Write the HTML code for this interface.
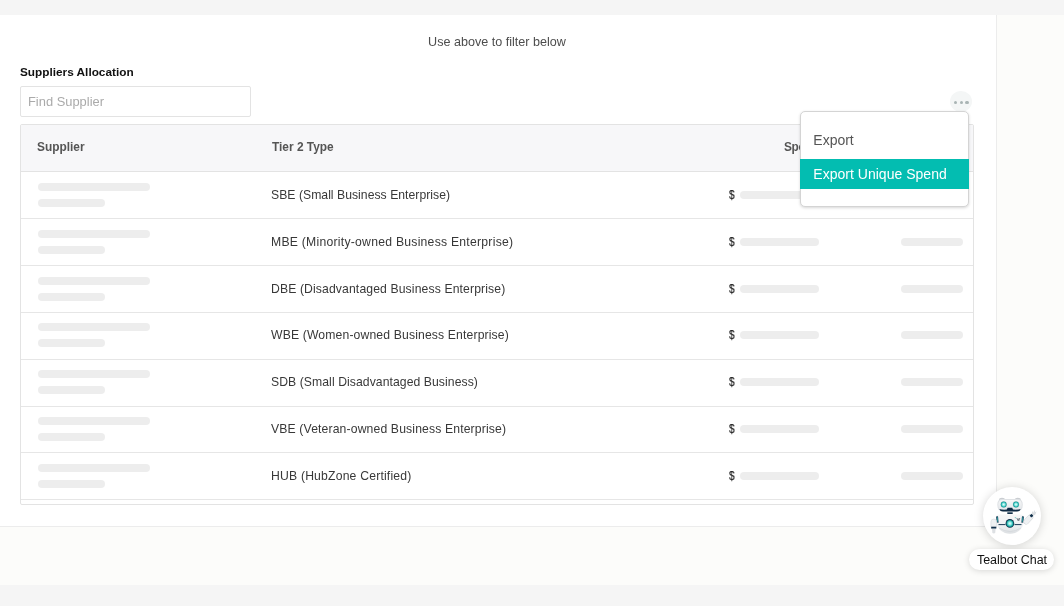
<!DOCTYPE html>
<html>
<head>
<meta charset="utf-8">
<style>
*{box-sizing:border-box;margin:0;padding:0}
.hint,.title,.search span,.th,.td,.dl,.mi,.lbl{will-change:transform}
html,body{width:1064px;height:606px;overflow:hidden;background:#f5f5f5;font-family:"Liberation Sans",sans-serif;color:#444}
.top{position:absolute;left:0;top:0;width:1064px;height:15px;background:#f5f5f5}
.right{position:absolute;left:996px;top:15px;width:68px;height:570px;background:#fcfcfa}
.bottom{position:absolute;left:0;top:527px;width:1064px;height:58px;background:#fcfcfa}
.panel{position:absolute;left:0;top:15px;width:997px;height:512px;background:#fff;border-right:1px solid #ececec;border-bottom:1px solid #ececec}
.hint{position:absolute;left:-1px;width:996px;top:35px;text-align:center;font-size:12.6px;color:#4d4d4d;line-height:15px}
.title{position:absolute;left:20px;top:65px;font-size:11.8px;font-weight:bold;color:#111;line-height:15px}
.search{position:absolute;left:20px;top:86px;width:231px;height:31px;border:1px solid #e3e3e3;border-radius:2px}
.search span{position:absolute;left:7px;top:7px;font-size:12.9px;color:#aaa;line-height:15px}
.dots{position:absolute;left:950px;top:91px;width:22px;height:21px;border-radius:50%;background:#f4f6f6}
.dots i{position:absolute;top:9.5px;width:3.4px;height:3.4px;border-radius:50%;background:#a9b4b4}
.table{position:absolute;left:20px;top:124px;width:954px;height:381px;border:1px solid #e3e3e3;border-radius:2px;overflow:hidden}
.thead{position:absolute;left:0;top:0;width:952px;height:47px;background:#f7f7f9;border-bottom:1px solid #e3e3e3}
.th{position:absolute;top:15px;font-size:11.9px;font-weight:bold;color:#555;line-height:15px}
.row{position:absolute;left:0;width:952px;height:46px}
.ln{position:absolute;left:0;width:952px;height:1px;background:#e6e6e6}
.sk{position:absolute;height:8px;border-radius:4px;background:#ededed}
.td{position:absolute;left:250px;top:16px;font-size:12.2px;color:#383838;line-height:15px;white-space:nowrap}
.dl{position:absolute;left:708px;top:16px;font-size:12.5px;color:#222;line-height:15px;transform:scaleX(.8);transform-origin:0 0;-webkit-text-stroke:0.25px #222}
.menu{position:absolute;left:800px;top:111px;width:169px;height:96px;background:#fff;border:1px solid #d4d4d4;border-radius:5px;box-shadow:0 1px 3px rgba(0,0,0,.16)}
.mi{position:absolute;left:-1px;width:169px;height:30px;font-size:14px;line-height:30px;padding-left:12px;color:#555;white-space:nowrap}
.mi.act{background:#03bdb1;color:#fff}
.bot{position:absolute;left:983px;top:487px;width:58px;height:58px;border-radius:50%;background:#fff;box-shadow:0 1px 10px rgba(0,0,0,.17)}
.lbl{position:absolute;left:969px;top:549px;width:85px;height:21px;border-radius:10.5px;background:#fff;box-shadow:0 1px 6px rgba(0,0,0,.15);font-size:12.5px;color:#111;line-height:23px;text-align:center;padding-left:1px}
</style>
</head>
<body>
<div class="top"></div>
<div class="right"></div>
<div class="bottom"></div>
<div class="panel">
</div>
<div class="hint">Use above to filter below</div>
<div class="title">Suppliers Allocation</div>
<div class="search"><span>Find Supplier</span></div>
<div class="dots"><i style="left:4px"></i><i style="left:9.6px"></i><i style="left:15.2px"></i></div>

<div class="table">
  <div class="thead">
    <div class="th" style="left:16px">Supplier</div>
    <div class="th" style="left:251px">Tier 2 Type</div>
    <div class="th" style="left:763px;letter-spacing:-0.4px">Spend</div>
  </div>
    <div class="row" style="top:47px"><div class="sk" style="left:17px;top:11px;width:112px"></div><div class="sk" style="left:17px;top:27px;width:67px"></div><div class="td" style="letter-spacing:0.03px">SBE (Small Business Enterprise)</div><div class="dl">$</div><div class="sk" style="left:719px;top:19px;width:79px"></div><div class="sk" style="left:880px;top:19px;width:62px"></div></div>
  <div class="row" style="top:94px"><div class="sk" style="left:17px;top:11px;width:112px"></div><div class="sk" style="left:17px;top:27px;width:67px"></div><div class="td" style="letter-spacing:0.25px">MBE (Minority-owned Business Enterprise)</div><div class="dl">$</div><div class="sk" style="left:719px;top:19px;width:79px"></div><div class="sk" style="left:880px;top:19px;width:62px"></div></div>
  <div class="row" style="top:141px"><div class="sk" style="left:17px;top:11px;width:112px"></div><div class="sk" style="left:17px;top:27px;width:67px"></div><div class="td" style="letter-spacing:0.12px">DBE (Disadvantaged Business Enterprise)</div><div class="dl">$</div><div class="sk" style="left:719px;top:19px;width:79px"></div><div class="sk" style="left:880px;top:19px;width:62px"></div></div>
  <div class="row" style="top:187px"><div class="sk" style="left:17px;top:11px;width:112px"></div><div class="sk" style="left:17px;top:27px;width:67px"></div><div class="td" style="letter-spacing:0.14px">WBE (Women-owned Business Enterprise)</div><div class="dl">$</div><div class="sk" style="left:719px;top:19px;width:79px"></div><div class="sk" style="left:880px;top:19px;width:62px"></div></div>
  <div class="row" style="top:234px"><div class="sk" style="left:17px;top:11px;width:112px"></div><div class="sk" style="left:17px;top:27px;width:67px"></div><div class="td" style="letter-spacing:0.07px">SDB (Small Disadvantaged Business)</div><div class="dl">$</div><div class="sk" style="left:719px;top:19px;width:79px"></div><div class="sk" style="left:880px;top:19px;width:62px"></div></div>
  <div class="row" style="top:281px"><div class="sk" style="left:17px;top:11px;width:112px"></div><div class="sk" style="left:17px;top:27px;width:67px"></div><div class="td" style="letter-spacing:0.14px">VBE (Veteran-owned Business Enterprise)</div><div class="dl">$</div><div class="sk" style="left:719px;top:19px;width:79px"></div><div class="sk" style="left:880px;top:19px;width:62px"></div></div>
  <div class="row" style="top:328px"><div class="sk" style="left:17px;top:11px;width:112px"></div><div class="sk" style="left:17px;top:27px;width:67px"></div><div class="td" style="letter-spacing:0.19px">HUB (HubZone Certified)</div><div class="dl">$</div><div class="sk" style="left:719px;top:19px;width:79px"></div><div class="sk" style="left:880px;top:19px;width:62px"></div></div>
  <div class="ln" style="top:93px"></div>
  <div class="ln" style="top:140px"></div>
  <div class="ln" style="top:187px"></div>
  <div class="ln" style="top:234px"></div>
  <div class="ln" style="top:281px"></div>
  <div class="ln" style="top:327px"></div>
  <div class="ln" style="top:374px"></div>
</div>

<div class="menu">
  <div class="mi" style="top:13px;padding-left:13.3px">Export</div>
  <div class="mi act" style="top:47px;padding-left:13.3px;letter-spacing:0.02px">Export Unique Spend</div>
</div>

<div class="bot"><svg width="58" height="58" viewBox="0 0 58 58" style="position:absolute;left:0;top:0">
<defs>
<radialGradient id="eye" cx="50%" cy="50%" r="50%"><stop offset="0" stop-color="#e8fffd"/><stop offset="0.5" stop-color="#7ee3dc"/><stop offset="0.85" stop-color="#17aaa5"/><stop offset="1" stop-color="#128f8c"/></radialGradient>
<linearGradient id="bodyg" x1="0" y1="0" x2="0" y2="1"><stop offset="0" stop-color="#f6f7f8"/><stop offset="0.55" stop-color="#eff1f3"/><stop offset="1" stop-color="#dcdfe2"/></linearGradient>
<linearGradient id="headg" x1="0" y1="0" x2="0" y2="1"><stop offset="0" stop-color="#f5f6f7"/><stop offset="1" stop-color="#e4e7ea"/></linearGradient>
</defs>
<ellipse cx="19" cy="12.8" rx="3" ry="2" fill="#c9cdd1"/>
<ellipse cx="34.8" cy="12.8" rx="3" ry="2" fill="#c9cdd1"/>
<path d="M19,12.1 L35,12.1 Q39.8,12.1 39.8,17.8 Q39.8,24.4 34,24.4 L20,24.4 Q14.3,24.4 14.3,17.8 Q14.3,12.1 19,12.1 Z" fill="#dfe2e5"/>
<path d="M19.5,13 L34.5,13 Q38.8,13 38.8,17.8 Q38.8,23 34,23 L20,23 Q15.3,23 15.3,17.8 Q15.3,13 19.5,13 Z" fill="url(#headg)"/>
<circle cx="20.7" cy="17.5" r="3.3" fill="#cfd8dc"/>
<circle cx="33" cy="17.5" r="3.3" fill="#cfd8dc"/>
<circle cx="20.7" cy="17.5" r="2.9" fill="url(#eye)"/>
<circle cx="33" cy="17.5" r="2.9" fill="url(#eye)"/>
<path d="M16.3,22 Q17,24.6 20,24.6 L34,24.6 Q37,24.6 37.7,22 Q35,23 30,22.6 L29.2,20.8 L24.6,20.8 L23.8,22.6 Q19,23 16.3,22 Z" fill="#0e2a44"/>
<rect x="24.3" y="25.3" width="5.4" height="1.7" fill="#14324c"/>
<path d="M13,30.3 Q13,27.6 16.5,27.6 L37.5,27.6 Q41,27.6 41,30.3 L40.6,36 Q39,43.5 32,46 Q27,47.6 22,46 Q15,43.5 13.4,36 Z" fill="url(#bodyg)"/>
<path d="M13.1,29.6 L15,29.3 L15.6,35.8 L13.7,35.6 Z" fill="#153a55"/>
<path d="M13.9,30.3 L14.6,30.2 L15,34.8 L14.3,34.7 Z" fill="#2fb3b0"/>
<path d="M40.9,29.6 L39,29.3 L38.4,35.8 L40.3,35.6 Z" fill="#153a55"/>
<path d="M40.1,30.3 L39.4,30.2 L39,34.8 L39.7,34.7 Z" fill="#2fb3b0"/>
<path d="M15.5,37.6 L22.5,37.6 M31.5,37.6 L38.5,37.6" stroke="#1a3c57" stroke-width="1" fill="none"/>
<path d="M16,41 Q27,48 38,41" stroke="#d0d4d8" stroke-width="0.7" fill="none"/>
<circle cx="26.9" cy="36.4" r="4.3" fill="#12304a"/>
<circle cx="26.9" cy="36.4" r="3.5" fill="url(#eye)"/>
<path d="M33.8,31 L35.2,33.8 L36.9,31 M35.4,31.5 L36.4,33.4" stroke="#55626f" stroke-width="0.8" fill="none"/>
<path d="M31.8,30.6 L33.2,30.8" stroke="#3fb8b4" stroke-width="0.7"/>
<rect x="7.9" y="32" width="5.7" height="10.3" rx="2.85" fill="#eef0f2" stroke="#cfd3d7" stroke-width="0.5"/>
<rect x="8.2" y="39.7" width="5.1" height="1.8" fill="#12304a"/>
<path d="M9,42 L12.6,42 L12.2,46 Q10.8,46.8 9.4,46 Z" fill="#dde0e3"/>
<path d="M43.3,34.6 L47.4,30.2" stroke="#cdd2d6" stroke-width="5.6" stroke-linecap="round"/><path d="M43.3,34.6 L47.4,30.2" stroke="#eff1f3" stroke-width="4.8" stroke-linecap="round"/>
<path d="M46.6,28.4 L48.9,26.8 L50.4,29.1 L48.1,30.6 Z" fill="#12304a"/>
<path d="M48.9,26.8 L49.2,24 L50.4,25.8 L51.2,23 L52.4,25.3 L53.6,24.3 L52.4,27.6 L50.6,28.6 Z" fill="#d9dde0"/>
</svg></div>
<div class="lbl">Tealbot Chat</div>
</body>
</html>
